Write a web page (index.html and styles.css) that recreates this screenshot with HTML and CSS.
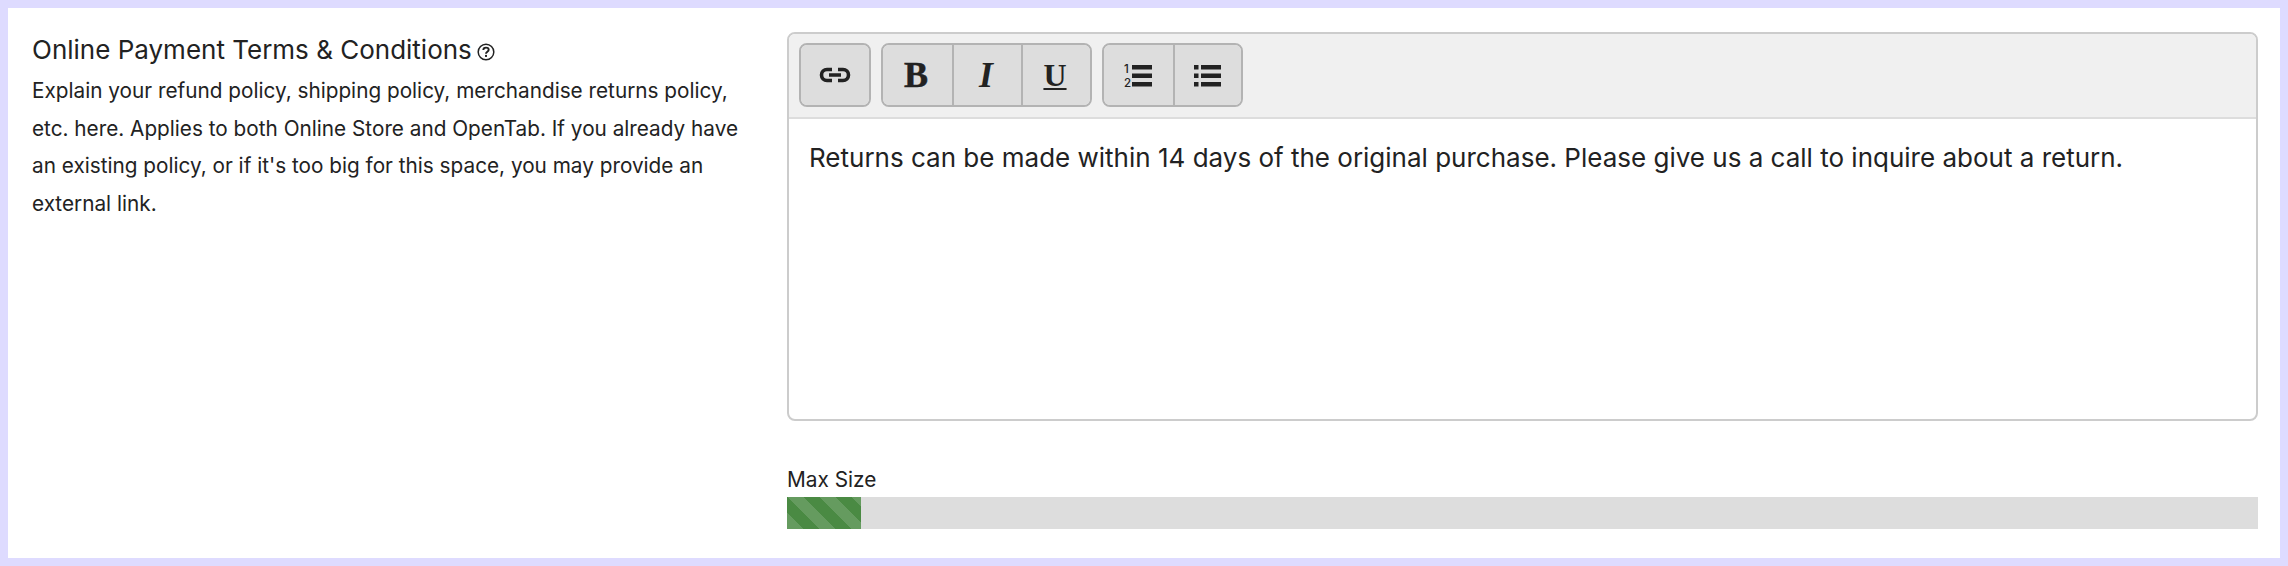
FILE: index.html
```html
<!DOCTYPE html>
<html lang="en">
<head>
  <meta charset="UTF-8" />
  <title>Online Payment Terms</title>
  <link rel="stylesheet" href="styles.css">
</head>
<body>
  <div class="panel">
    <div class="intro">
      <h3 class="intro-title">Online Payment Terms &amp; Conditions
        <svg class="help-icon" viewBox="0 0 18 18" width="18" height="18">
          <circle cx="9" cy="9" r="7.8" fill="none" stroke="#222" stroke-width="1.5"/>
          <path d="M6.3 7.1c0-1.6 1.1-2.5 2.7-2.5s2.7.9 2.7 2.2c0 2-2.7 1.9-2.7 3.9" fill="none" stroke="#222" stroke-width="1.9"/>
          <rect x="8" y="11.9" width="2" height="2" fill="#222"/>
        </svg>
      </h3>
      <p class="intro-text">Explain your refund policy, shipping policy, merchandise returns policy, etc. here. Applies to both Online Store and OpenTab. If you already have an existing policy, or if it's too big for this space, you may provide an external link.</p>
    </div>

    <div class="field">
      <div class="editor">
        <div class="toolbar">
          <div class="btn-group btn-group-link">
            <button class="btn">
              <svg viewBox="0 0 32 16" width="32" height="16">
                <path d="M13 2.5H8a5.5 5.5 0 0 0 0 11h5M19 2.5h5a5.5 5.5 0 0 1 0 11h-5M10 8h12" fill="none" stroke="#222" stroke-width="3.6"/>
              </svg>
            </button>
          </div>
          <div class="btn-group">
            <button class="btn btn-bold">B</button>
            <button class="btn btn-italic">I</button>
            <button class="btn btn-underline">U</button>
          </div>
          <div class="btn-group btn-group-list">
            <button class="btn">
              <svg viewBox="0 0 30 26" width="30" height="26">
                <text x="1" y="11" class="list-num">1</text>
                <text x="1" y="25" class="list-num">2</text>
                <rect x="9" y="3" width="20" height="4.5" fill="#222"/>
                <rect x="9" y="11.5" width="20" height="4.5" fill="#222"/>
                <rect x="9" y="20" width="20" height="4.5" fill="#222"/>
              </svg>
            </button>
            <button class="btn">
              <svg viewBox="0 0 28 26" width="28" height="26">
                <rect x="0" y="3" width="4.5" height="4.5" fill="#222"/>
                <rect x="0" y="11.5" width="4.5" height="4.5" fill="#222"/>
                <rect x="0" y="20" width="4.5" height="4.5" fill="#222"/>
                <rect x="7" y="3" width="20" height="4.5" fill="#222"/>
                <rect x="7" y="11.5" width="20" height="4.5" fill="#222"/>
                <rect x="7" y="20" width="20" height="4.5" fill="#222"/>
              </svg>
            </button>
          </div>
        </div>
        <div class="editor-body">Returns can be made within 14 days of the original purchase. Please give us a call to inquire about a return.</div>
      </div>

      <div class="meter">
        <div class="meter-label">Max Size</div>
        <div class="meter-track">
          <div class="meter-fill" style="width: 5%"></div>
        </div>
      </div>
    </div>
  </div>
</body>
</html>
```

FILE: styles.css
```css
html, body {
  margin: 0;
  padding: 0;
  background: #fff;
}

body {
  font-family: "Inter", "Liberation Sans", sans-serif;
  color: #222;
  width: 2288px;
  height: 566px;
  box-sizing: border-box;
  border: 8px solid #dedbff;
  overflow: hidden;
}

.panel {
  display: grid;
  grid-template-columns: 755px 1471px;
  padding: 24px 22px 0 24px;
}

.intro-title {
  margin: 0;
  font-size: 26px;
  font-weight: 400;
  line-height: 36px;
  color: #222;
}

.help-icon {
  vertical-align: -2px;
  margin-left: -2px;
}

.intro-text {
  margin: 4px 0 0;
  width: 725px;
  font-size: 20.75px;
  line-height: 37.6px;
}

.editor {
  height: 389px;
  box-sizing: border-box;
  border: 2px solid #ccc;
  border-radius: 8px;
  overflow: hidden;
}

.toolbar {
  display: flex;
  gap: 10px;
  height: 85px;
  box-sizing: border-box;
  padding: 9px 10px;
  background: #f0f0f0;
  border-bottom: 2px solid #ddd;
}

.btn-group {
  display: flex;
  height: 64px;
  box-sizing: border-box;
  border: 2px solid #b3b3b3;
  border-radius: 8px;
  overflow: hidden;
}

.btn {
  display: flex;
  align-items: center;
  justify-content: center;
  width: 69px;
  padding: 0;
  border: 0;
  background: #ddd;
  color: #222;
  font-family: "Liberation Serif", serif;
}

.btn + .btn {
  border-left: 2px solid #b3b3b3;
}

.btn-group-link .btn {
  width: 68px;
}

.btn-group-list .btn {
  width: 68.5px;
}

.btn-bold {
  padding-right: 3px;
  font-size: 36px;
  font-weight: 700;
  -webkit-text-stroke: 0.5px #222;
}

.btn-italic {
  padding-right: 3px;
  font-size: 36px;
  font-weight: 700;
  font-style: italic;
}

.btn-underline {
  padding-right: 3px;
  font-size: 32px;
  font-weight: 700;
  text-decoration: underline;
  text-decoration-thickness: 2px;
  text-underline-offset: 2px;
}

.list-num {
  font-family: "Inter", sans-serif;
  font-size: 11.5px;
  font-weight: 500;
  fill: #222;
}

.editor-body {
  padding: 19px 20px;
  font-size: 26px;
  line-height: 39px;
}

.meter {
  margin-top: 46px;
}

.meter-label {
  font-size: 20.8px;
  line-height: 25px;
  margin-bottom: 5px;
}

.meter-track {
  height: 32px;
  background: #ddd;
}

.meter-fill {
  height: 100%;
  background-color: #4a8a43;
  background-image: linear-gradient(45deg, rgba(255,255,255,.15) 25%, transparent 25%, transparent 50%, rgba(255,255,255,.15) 50%, rgba(255,255,255,.15) 75%, transparent 75%, transparent);
  background-size: 32px 32px;
}
```
